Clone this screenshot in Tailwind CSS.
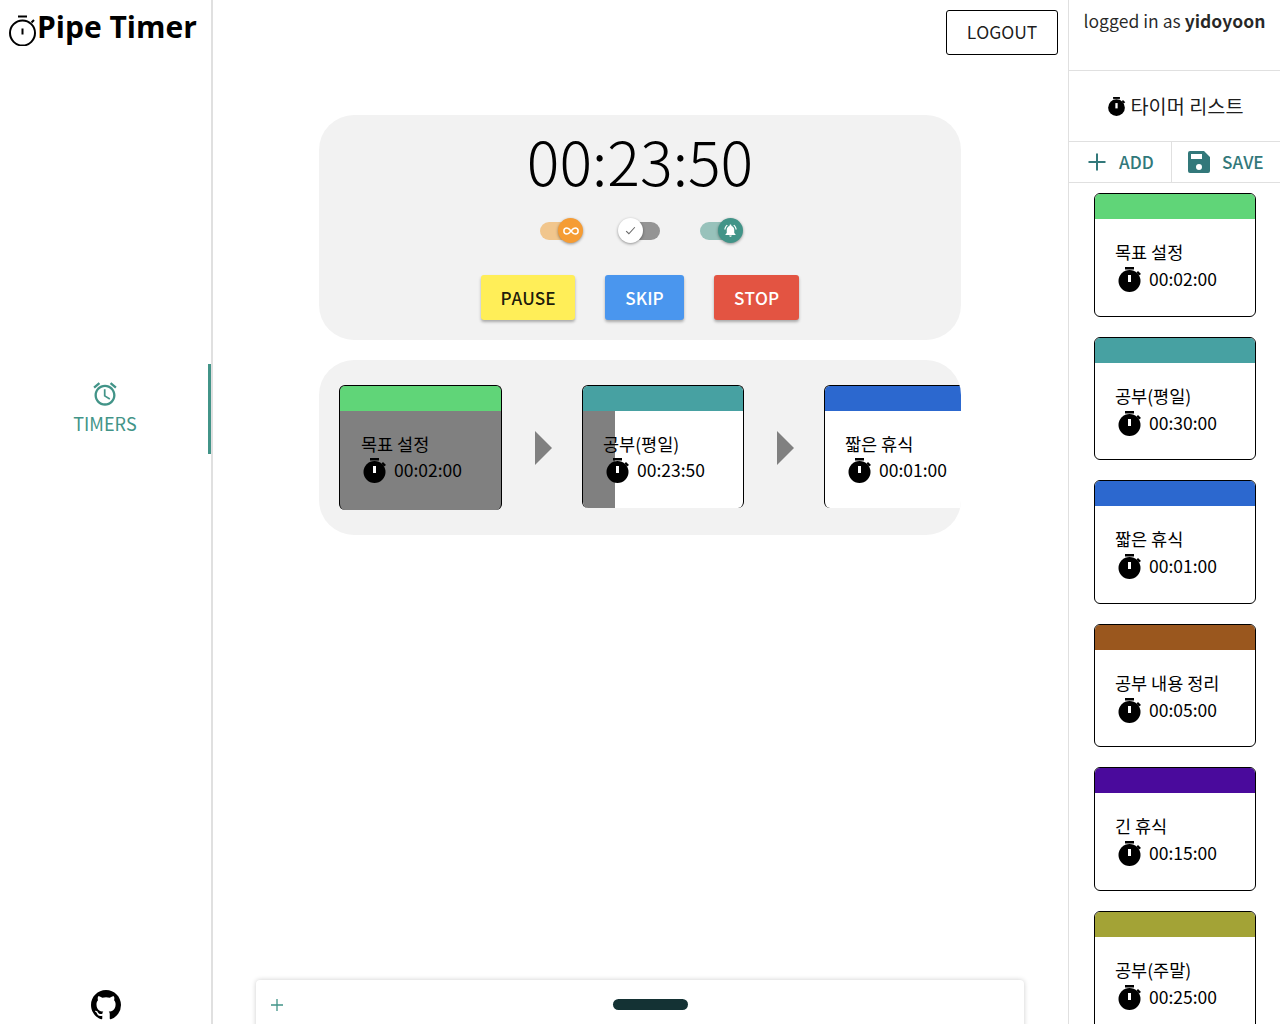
<!DOCTYPE html>
<html lang="en">
<head>
<meta charset="utf-8">
<title>Pipe Timer</title>
<script src="https://cdn.jsdelivr.net/npm/@tailwindcss/browser@4"></script>
</head>
<body class="h-[1024px] w-[1280px] overflow-hidden bg-white font-['Noto_Sans_CJK_KR','Noto_Sans',sans-serif] text-black [font-variant-ligatures:none] [font-feature-settings:'calt'_0,'ccmp'_0,'locl'_0,'kern'_0]">
<div class="relative flex h-[1024px] w-[1280px]">

  <!-- left sidebar -->
  <aside class="flex h-full w-[213px] shrink-0 flex-col border-r-2 border-[#e0e0e0]">
    <div class="flex h-[364px] items-start pl-[7px]">
      <svg class="mt-[15px] h-[31px] w-[31px] shrink-0" viewBox="0 0 31 31" fill="none" stroke="#000" stroke-width="2">
        <circle cx="15.5" cy="18" r="12.5"/>
        <path d="M11 1.500h9M15.5 13.5v6M24.5 7.5l2.5-2.500"/>
      </svg>
      <span class="ml-[-1px] mt-[6px] font-['Open_Sans',sans-serif] text-[30px] leading-[42px] font-bold whitespace-nowrap">Pipe Timer</span>
    </div>
    <div class="relative flex h-[90px] flex-col items-center pr-[1px] text-[#429488]">
      <svg class="mt-[16px] h-[28px] w-[28px]" viewBox="0 0 24 24" fill="currentColor"><path d="M22 5.72l-4.6-3.86-1.29 1.53 4.6 3.86L22 5.72zM7.88 3.39L6.6 1.86 2 5.71l1.29 1.53 4.59-3.85zM12.5 8H11v6l4.75 2.85.75-1.23-4-2.37V8zM12 4c-4.97 0-9 4.03-9 9s4.03 9 9 9 9-4.03 9-9-4.03-9-9-9zm0 16c-3.87 0-7-3.13-7-7s3.13-7 7-7 7 3.13 7 7-3.13 7-7 7z"/></svg>
      <span class="mt-[2px] text-[18px] leading-[26px]">TIMERS</span>
      <div class="absolute top-0 right-0 h-[90px] w-[3px] bg-[#429488]"></div>
    </div>
    <div class="flex flex-1 items-end justify-center pl-[1px]">
      <svg class="mb-[4px] h-[30px] w-[30px]" viewBox="0 0 16 16" fill="#000"><path d="M8 0C3.58 0 0 3.58 0 8c0 3.54 2.29 6.53 5.47 7.59.4.07.55-.17.55-.38 0-.19-.01-.82-.01-1.49-2.01.37-2.53-.49-2.69-.94-.09-.23-.48-.94-.82-1.13-.28-.15-.68-.52-.01-.53.63-.01 1.08.58 1.23.82.72 1.21 1.87.87 2.33.66.07-.52.28-.87.51-1.07-1.78-.2-3.64-.89-3.64-3.95 0-.87.31-1.59.82-2.15-.08-.2-.36-1.02.08-2.12 0 0 .67-.21 2.2.82.64-.18 1.32-.27 2-.27s1.36.09 2 .27c1.53-1.04 2.2-.82 2.2-.82.44 1.1.16 1.92.08 2.12.51.56.82 1.27.82 2.15 0 3.07-1.87 3.75-3.65 3.95.29.25.54.73.54 1.48 0 1.07-.01 1.93-.01 2.2 0 .21.15.46.55.38A8.01 8.01 0 0 0 16 8c0-4.42-3.58-8-8-8z"/></svg>
    </div>
  </aside>

  <!-- main -->
  <main class="flex h-full w-[855px] shrink-0 flex-col items-center pr-[1px]">
    <div class="flex h-[115px] w-full items-start justify-end pt-[10px] pr-[9px]">
      <button class="h-[45px] w-[112px] rounded-[3px] border border-black bg-white text-[17.500px] text-black/90">LOGOUT</button>
    </div>

    <section class="flex h-[225px] w-[642px] flex-col items-center rounded-[35px] bg-[#f2f2f2]">
      <div class="mt-[5px] h-[80px] text-[61px] leading-[80px] font-light">00:23:50</div>
      <div class="mt-[18px] mr-[2px] flex h-[26px] items-center">
        <div class="relative h-[18px] w-[38px] rounded-full bg-[#f1c68d]">
          <div class="absolute top-[-4px] right-[-5px] flex h-[25px] w-[25px] items-center justify-center rounded-full bg-[#f59c34] shadow-[0_1px_3px_rgba(0,0,0,0.4)]">
            <svg class="h-[18px] w-[18px]" viewBox="0 0 24 24" fill="none" stroke="#fff" stroke-width="2"><path d="M12 12c-2-2.6-3.6-4-5.5-4a4 4 0 0 0 0 8c1.9 0 3.5-1.4 5.5-4zm0 0c2 2.6 3.6 4 5.500 4a4 4 0 0 0 0-8c-1.900 0-3.500 1.400-5.500 4z"/></svg>
          </div>
        </div>
        <div class="relative ml-[44px] h-[18px] w-[38px] rounded-full bg-[#949494]">
          <div class="absolute top-[-4px] left-[-4px] flex h-[25px] w-[25px] items-center justify-center rounded-full bg-white shadow-[0_1px_3px_rgba(0,0,0,0.4)]">
            <svg class="h-[13px] w-[13px]" viewBox="0 0 24 24" fill="none" stroke="#666" stroke-width="2"><path d="M4 13l5 5L20 6"/></svg>
          </div>
        </div>
        <div class="relative ml-[40px] h-[18px] w-[38px] rounded-full bg-[#98c2bb]">
          <div class="absolute top-[-4px] right-[-5px] flex h-[25px] w-[25px] items-center justify-center rounded-full bg-[#429488] shadow-[0_1px_3px_rgba(0,0,0,0.4)]">
            <svg class="h-[15px] w-[15px]" viewBox="0 0 24 24" fill="#fff"><path d="M7.58 4.08L6.15 2.65C3.75 4.48 2.17 7.3 2.03 10.5h2c.15-2.650 1.510-4.970 3.550-6.420zM19.970 10.500h2c-.150-3.200-1.730-6.020-4.120-7.850l-1.420 1.430c2.020 1.450 3.390 3.770 3.540 6.420zM18 11c0-3.070-1.640-5.640-4.500-6.320V4c0-.830-.670-1.500-1.500-1.500s-1.500.670-1.500 1.500v.680C7.630 5.360 6 7.920 6 11v5l-2 2v1h16v-1l-2-2v-5zm-6 11c.140 0 .270-.010.400-.040.650-.140 1.180-.580 1.440-1.180.100-.240.150-.500.150-.780h-4c.010 1.100.900 2 2.010 2z"/></svg>
          </div>
        </div>
      </div>
      <div class="mt-[31px] flex items-start">
        <button class="h-[45px] w-[94px] rounded-[3px] bg-[#ffee58] pt-[1px] text-[17.200px] font-medium text-black/90 shadow-[0_2px_3px_rgba(0,0,0,0.3)]">PAUSE</button>
        <button class="ml-[30px] h-[45px] w-[79px] rounded-[3px] bg-[#4a96ee] pt-[1px] text-[17.200px] font-medium text-white shadow-[0_2px_3px_rgba(0,0,0,0.3)]">SKIP</button>
        <button class="ml-[30px] h-[45px] w-[85px] rounded-[3px] bg-[#e35442] pt-[1px] text-[17.200px] font-medium text-white shadow-[0_2px_3px_rgba(0,0,0,0.3)]">STOP</button>
      </div>
    </section>

    <section class="mt-[20px] h-[175px] w-[642px] overflow-hidden rounded-[35px] bg-[#f2f2f2]">
      <div class="flex items-start pt-[25px] pl-[20px]">
        <!-- card 1 -->
        <div class="relative h-[125px] w-[163px] shrink-0 overflow-hidden rounded-[6px] border border-b-0 border-black bg-[#808080]">
          <div class="h-[25px] bg-[#60d578]"></div>
          <div class="pt-[20px] pl-[21px] text-[17.500px] leading-[26px]">목표 설정</div>
          <div class="mt-[1px] flex items-start pl-[22px] text-[17.500px]">
            <svg class="h-[25px] w-[25px] shrink-0" viewBox="0 0 25 25" fill="#000"><circle cx="12.500" cy="14" r="11"/><rect x="8" y="0" width="9" height="2.500"/><path d="M21 4l3 3-2 1.500-2.500-3z"/><rect x="11" y="8" width="3" height="7" fill="#fff"/></svg>
            <span class="ml-[7px] leading-[24px]">00:02:00</span>
          </div>
        </div>
        <div class="flex h-[125px] w-[80px] shrink-0 items-center pl-[33px]">
          <div class="mt-[1px] h-0 w-0 border-y-[17px] border-l-[17px] border-y-transparent border-l-[#808080]"></div>
        </div>
        <!-- card 2 -->
        <div class="relative h-[123px] w-[162px] shrink-0 overflow-hidden rounded-[6px] border border-b-0 border-black bg-white">
          <div class="h-[25px] bg-[#47a1a2]"></div>
          <div class="absolute top-[25px] bottom-0 left-0 w-[32px] bg-[#808080]"></div>
          <div class="relative pt-[20px] pl-[20px] text-[17.500px] leading-[26px]">공부(평일)</div>
          <div class="relative mt-[1px] flex items-start pl-[22px] text-[17.500px]">
            <svg class="h-[25px] w-[25px] shrink-0" viewBox="0 0 25 25" fill="#000"><circle cx="12.500" cy="14" r="11"/><rect x="8" y="0" width="9" height="2.500"/><path d="M21 4l3 3-2 1.500-2.500-3z"/><rect x="11" y="8" width="3" height="7" fill="#fff"/></svg>
            <span class="ml-[7px] leading-[24px]">00:23:50</span>
          </div>
        </div>
        <div class="flex h-[125px] w-[80px] shrink-0 items-center pl-[33px]">
          <div class="mt-[1px] h-0 w-0 border-y-[17px] border-l-[17px] border-y-transparent border-l-[#808080]"></div>
        </div>
        <!-- card 3 -->
        <div class="relative h-[123px] w-[162px] shrink-0 overflow-hidden rounded-[6px] border border-b-0 border-black bg-white">
          <div class="h-[25px] bg-[#2c68cf]"></div>
          <div class="pt-[20px] pl-[20px] text-[17.500px] leading-[26px]">짧은 휴식</div>
          <div class="mt-[1px] flex items-start pl-[22px] text-[17.500px]">
            <svg class="h-[25px] w-[25px] shrink-0" viewBox="0 0 25 25" fill="#000"><circle cx="12.500" cy="14" r="11"/><rect x="8" y="0" width="9" height="2.500"/><path d="M21 4l3 3-2 1.500-2.500-3z"/><rect x="11" y="8" width="3" height="7" fill="#fff"/></svg>
            <span class="ml-[7px] leading-[24px]">00:01:00</span>
          </div>
        </div>
      </div>
    </section>
  </main>

  <!-- right sidebar -->
  <aside class="flex h-full w-[212px] shrink-0 flex-col border-l border-[#e0e0e0]">
    <div class="h-[71px] shrink-0 border-b border-[#e0e0e0] pt-[8px] text-center text-[17.500px] leading-[26px] whitespace-nowrap text-black/85">logged in as <b class="font-bold">yidoyoon</b></div>
    <div class="flex h-[71px] shrink-0 items-center justify-center border-b border-[#e0e0e0] pl-[2px] text-[19.700px]">
      <svg class="mr-[4px] h-[19px] w-[19px]" viewBox="0 0 25 25" fill="#000"><circle cx="12.500" cy="14" r="11"/><rect x="8" y="0" width="9" height="2.500"/><path d="M21 4l3 3-2 1.500-2.500-3z"/><rect x="11" y="8" width="3" height="7" fill="#fff"/></svg>
      <span class="text-black/90">타이머 리스트</span>
    </div>
    <div class="flex h-[41px] shrink-0 border-b border-[#e0e0e0] text-[17.200px] font-medium text-[#32787a]">
      <div class="flex w-[103px] items-center border-r border-[#e0e0e0] pl-[18px]">
        <svg class="h-[20px] w-[20px]" viewBox="0 0 20 20" fill="none" stroke="currentColor" stroke-width="2"><path d="M10 1.500v17M1.500 10h17"/></svg>
        <span class="ml-[12px]">ADD</span>
      </div>
      <div class="flex flex-1 items-center pl-[15px]">
        <svg class="h-[24px] w-[24px]" viewBox="0 0 24 24" fill="currentColor"><path d="M17 1H3a2 2 0 0 0-2 2v18a2 2 0 0 0 2 2h18a2 2 0 0 0 2-2V7l-6-6zm-5 19a3 3 0 1 1 0-6 3 3 0 0 1 0 6zm3-11H4V4h11v5z"/></svg>
        <span class="ml-[11px]">SAVE</span>
      </div>
    </div>
    <div class="flex flex-col items-center gap-[20px] pt-[10px] pl-[1px]">
      <div class="h-[124px] w-[162px] shrink-0 overflow-hidden rounded-[6px] border border-black">
        <div class="h-[25px] bg-[#60d578]"></div>
        <div class="pt-[20px] pl-[20px] text-[17.500px] leading-[26px]">목표 설정</div>
        <div class="mt-[1px] flex items-center pl-[22px] text-[17.500px] leading-[26px]">
          <svg class="h-[25px] w-[25px] shrink-0" viewBox="0 0 25 25" fill="#000"><circle cx="12.500" cy="14" r="11"/><rect x="8" y="0" width="9" height="2.500"/><path d="M21 4l3 3-2 1.500-2.500-3z"/><rect x="11" y="8" width="3" height="7" fill="#fff"/></svg>
          <span class="ml-[7px]">00:02:00</span>
        </div>
      </div>
      <div class="h-[123px] w-[162px] shrink-0 overflow-hidden rounded-[6px] border border-black">
        <div class="h-[25px] bg-[#47a1a2]"></div>
        <div class="pt-[20px] pl-[20px] text-[17.500px] leading-[26px]">공부(평일)</div>
        <div class="mt-[1px] flex items-center pl-[22px] text-[17.500px] leading-[26px]">
          <svg class="h-[25px] w-[25px] shrink-0" viewBox="0 0 25 25" fill="#000"><circle cx="12.500" cy="14" r="11"/><rect x="8" y="0" width="9" height="2.500"/><path d="M21 4l3 3-2 1.500-2.500-3z"/><rect x="11" y="8" width="3" height="7" fill="#fff"/></svg>
          <span class="ml-[7px]">00:30:00</span>
        </div>
      </div>
      <div class="h-[124px] w-[162px] shrink-0 overflow-hidden rounded-[6px] border border-black">
        <div class="h-[25px] bg-[#2c68cf]"></div>
        <div class="pt-[20px] pl-[20px] text-[17.500px] leading-[26px]">짧은 휴식</div>
        <div class="mt-[1px] flex items-center pl-[22px] text-[17.500px] leading-[26px]">
          <svg class="h-[25px] w-[25px] shrink-0" viewBox="0 0 25 25" fill="#000"><circle cx="12.500" cy="14" r="11"/><rect x="8" y="0" width="9" height="2.500"/><path d="M21 4l3 3-2 1.500-2.500-3z"/><rect x="11" y="8" width="3" height="7" fill="#fff"/></svg>
          <span class="ml-[7px]">00:01:00</span>
        </div>
      </div>
      <div class="h-[123px] w-[162px] shrink-0 overflow-hidden rounded-[6px] border border-black">
        <div class="h-[25px] bg-[#9a571e]"></div>
        <div class="pt-[20px] pl-[20px] text-[17.500px] leading-[26px]">공부 내용 정리</div>
        <div class="mt-[1px] flex items-center pl-[22px] text-[17.500px] leading-[26px]">
          <svg class="h-[25px] w-[25px] shrink-0" viewBox="0 0 25 25" fill="#000"><circle cx="12.500" cy="14" r="11"/><rect x="8" y="0" width="9" height="2.500"/><path d="M21 4l3 3-2 1.500-2.500-3z"/><rect x="11" y="8" width="3" height="7" fill="#fff"/></svg>
          <span class="ml-[7px]">00:05:00</span>
        </div>
      </div>
      <div class="h-[124px] w-[162px] shrink-0 overflow-hidden rounded-[6px] border border-black">
        <div class="h-[25px] bg-[#4a0a9c]"></div>
        <div class="pt-[20px] pl-[20px] text-[17.500px] leading-[26px]">긴 휴식</div>
        <div class="mt-[1px] flex items-center pl-[22px] text-[17.500px] leading-[26px]">
          <svg class="h-[25px] w-[25px] shrink-0" viewBox="0 0 25 25" fill="#000"><circle cx="12.500" cy="14" r="11"/><rect x="8" y="0" width="9" height="2.500"/><path d="M21 4l3 3-2 1.500-2.500-3z"/><rect x="11" y="8" width="3" height="7" fill="#fff"/></svg>
          <span class="ml-[7px]">00:15:00</span>
        </div>
      </div>
      <div class="h-[124px] w-[162px] shrink-0 overflow-hidden rounded-[6px] border border-black">
        <div class="h-[25px] bg-[#a3a336]"></div>
        <div class="pt-[20px] pl-[20px] text-[17.500px] leading-[26px]">공부(주말)</div>
        <div class="mt-[1px] flex items-center pl-[22px] text-[17.500px] leading-[26px]">
          <svg class="h-[25px] w-[25px] shrink-0" viewBox="0 0 25 25" fill="#000"><circle cx="12.500" cy="14" r="11"/><rect x="8" y="0" width="9" height="2.500"/><path d="M21 4l3 3-2 1.500-2.500-3z"/><rect x="11" y="8" width="3" height="7" fill="#fff"/></svg>
          <span class="ml-[7px]">00:25:00</span>
        </div>
      </div>
    </div>
  </aside>

  <!-- bottom drawer -->
  <div class="absolute top-[980px] left-[256px] h-[60px] w-[768px] rounded-t-[4px] bg-white shadow-[0_0_5px_rgba(0,0,0,0.2)]">
    <svg class="absolute top-[18px] left-[14px] h-[14px] w-[14px]" viewBox="0 0 14 14" fill="none" stroke="#429488" stroke-width="1.300"><path d="M7 1v12M1 7h12"/></svg>
    <div class="absolute top-[19px] left-[357px] h-[11px] w-[75px] rounded-full bg-[#143234]"></div>
  </div>
</div>
</body>
</html>
